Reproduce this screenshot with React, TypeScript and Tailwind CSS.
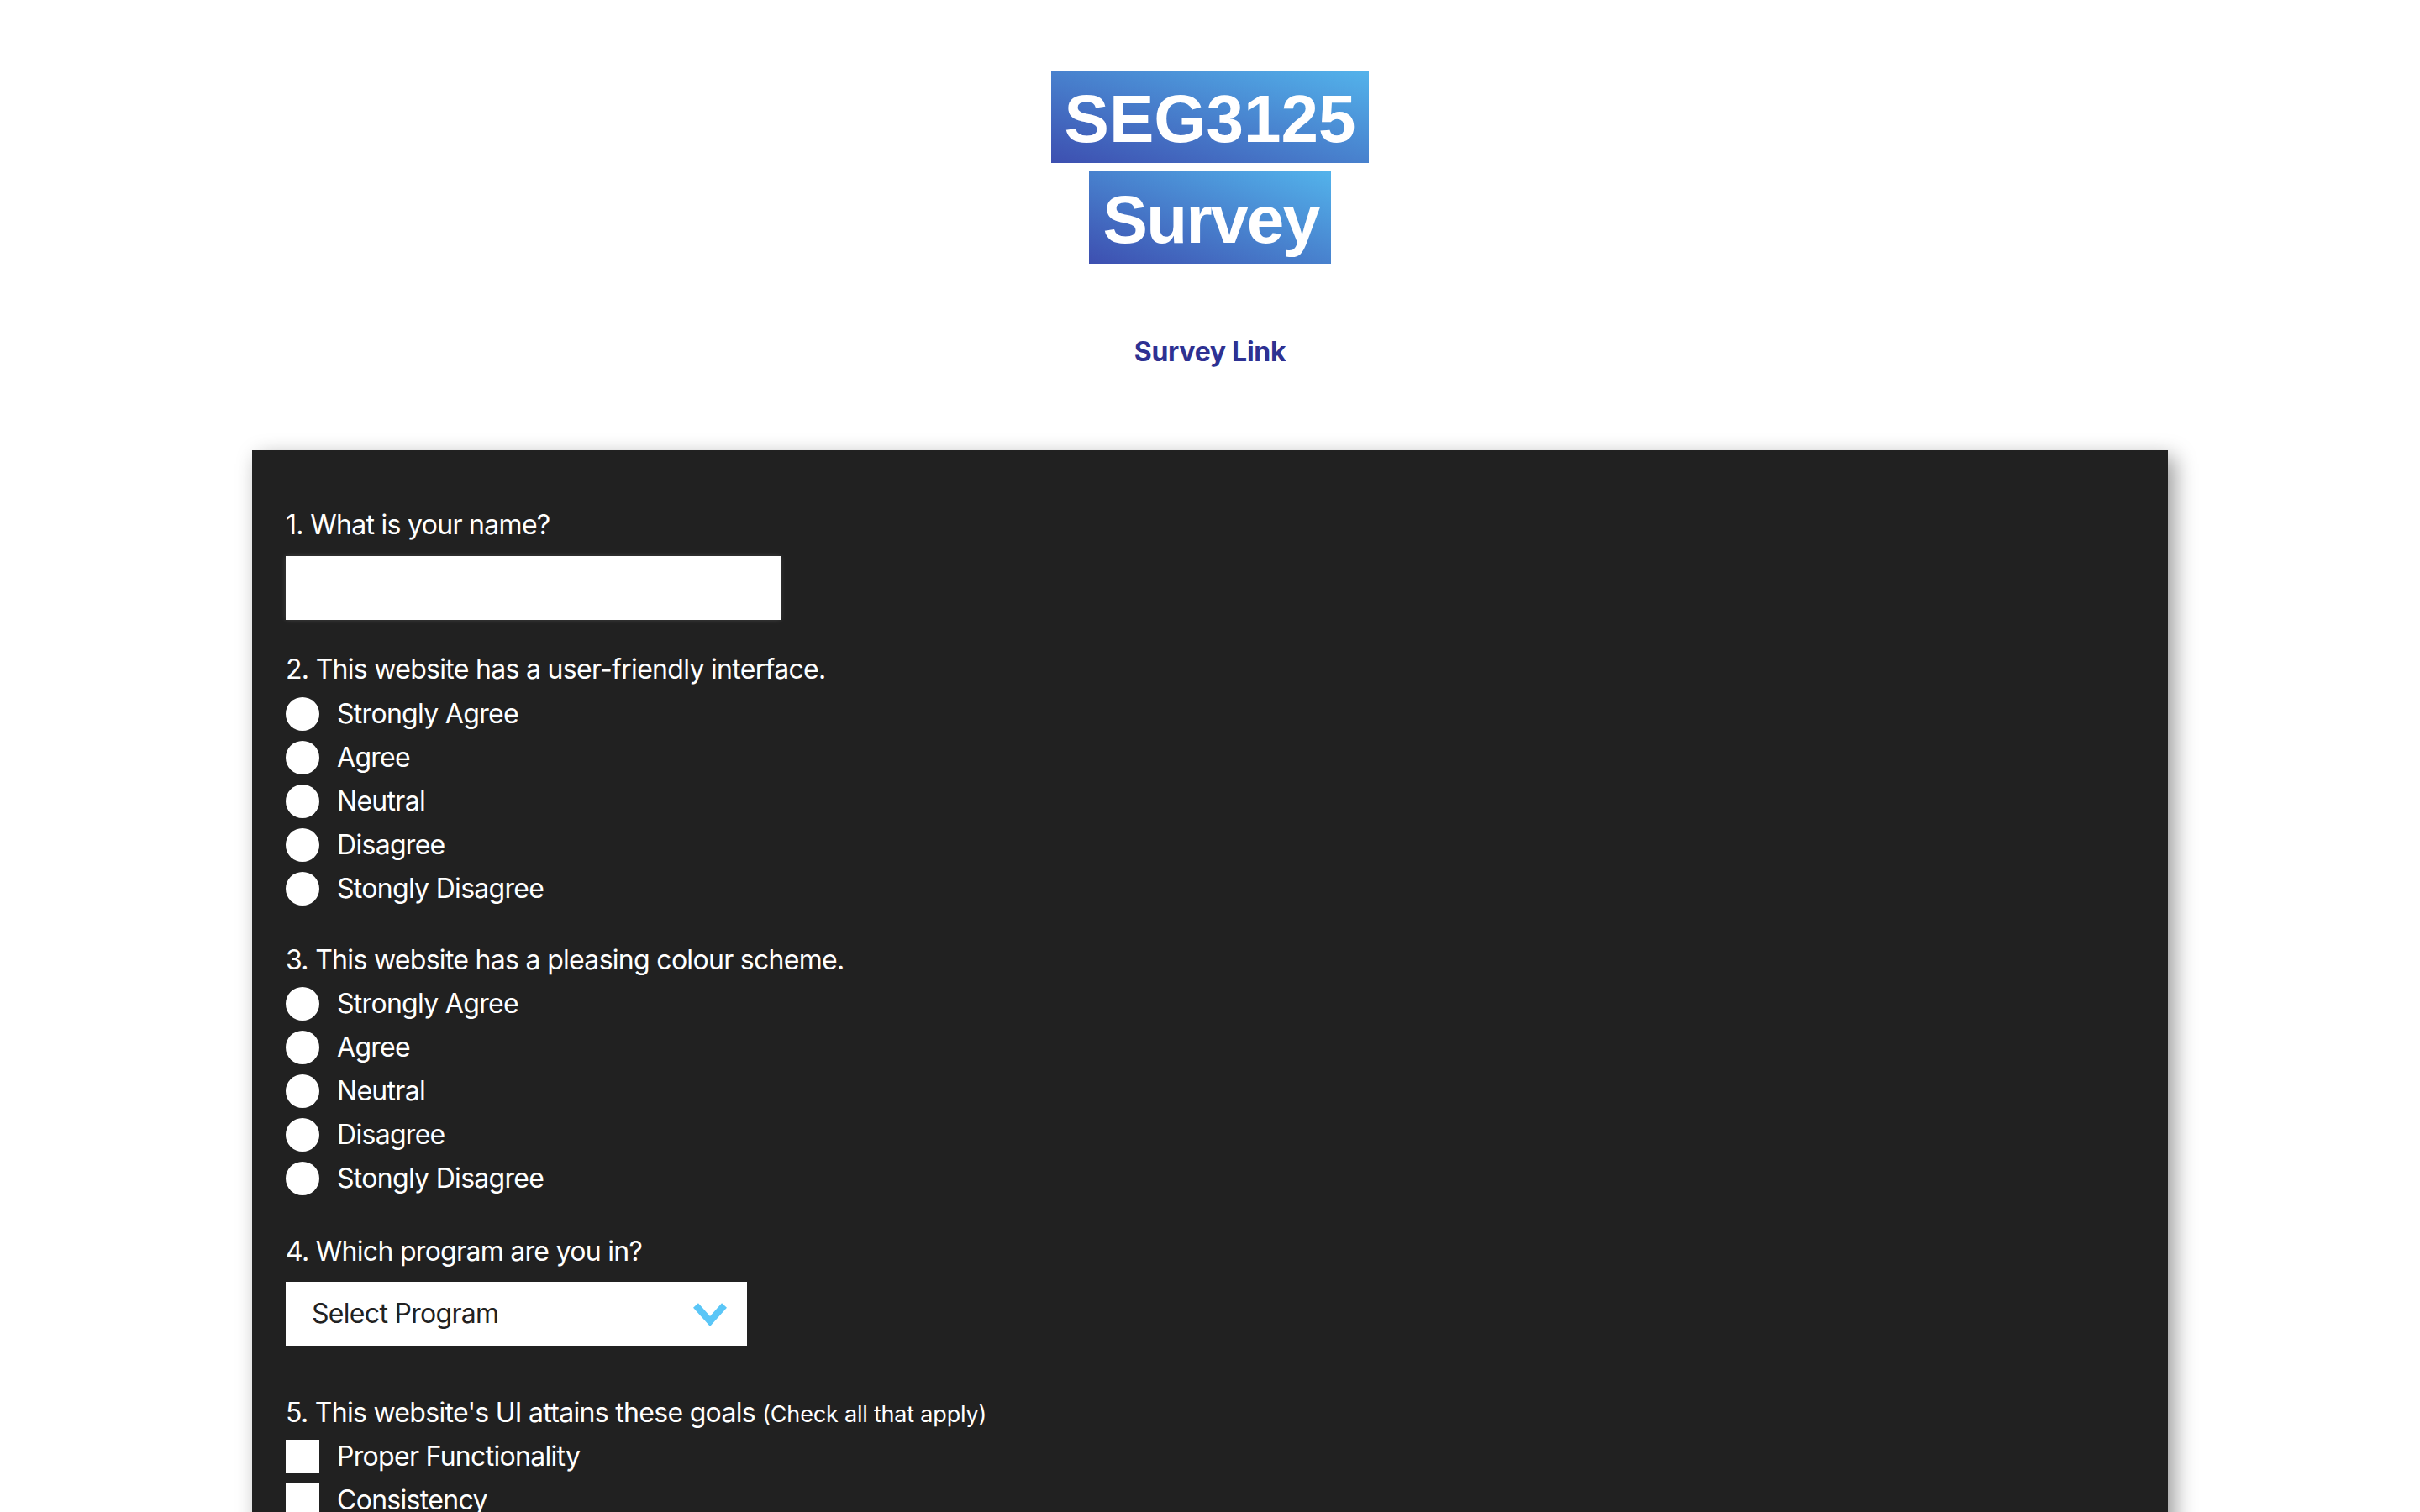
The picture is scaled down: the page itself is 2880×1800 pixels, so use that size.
import React from "react";

const scale = ["Strongly Agree", "Agree", "Neutral", "Disagree", "Stongly Disagree"];
const goals = ["Proper Functionality", "Consistency", "Visibility", "Feedback", "Aesthetics"];

function Radio({ label }: { label: string }) {
  return (
    <label className="flex h-[52px] items-center">
      <span className="h-[40px] w-[40px] rounded-full bg-white" />
      <span className="ml-[21px]">{label}</span>
    </label>
  );
}

function Check({ label }: { label: string }) {
  return (
    <label className="flex h-[52px] items-center">
      <span className="h-[40px] w-[40px] bg-white" />
      <span className="ml-[21px]">{label}</span>
    </label>
  );
}

function Question({ title, children, className }: { title: React.ReactNode; children: React.ReactNode; className?: string }) {
  return (
    <div className={className}>
      <p className="leading-[40px]">{title}</p>
      {children}
    </div>
  );
}

export default function App() {
  return (
    <div className="min-h-screen bg-white pb-[120px] font-['Inter',sans-serif] text-[32px] tracking-[-0.7px]">
      <header className="flex flex-col items-center gap-[10px] pt-[84px] font-['Liberation_Sans',Arial,sans-serif] text-[80px] font-bold tracking-normal text-white">
        <span className="flex h-[110px] items-center bg-[linear-gradient(to_top_right,#3d4fb0,#53b3eb)] px-[16px] pt-[6px]">SEG3125</span>
        <span className="flex h-[110px] items-center bg-[linear-gradient(to_top_right,#3d4fb0,#53b3eb)] pl-[16px] pr-[14px] pt-[6px] tracking-[-1.6px]">Survey</span>
      </header>

      <div className="mt-[81px] text-center">
        <a href="#survey" className="font-bold leading-[40px] tracking-[-0.3px] text-[#2e3192]">Survey Link</a>
      </div>

      <main id="survey" className="mx-[300px] mt-[93px] bg-[#212121] pb-[70px] pl-[40px] pt-[69px] text-white shadow-[8px_8px_24px_rgba(0,0,0,0.4)]">
        <Question title="1. What is your name?">
          <div className="mt-[17px] h-[76px] w-[589px] bg-white shadow-[0_0_6px_rgba(255,255,255,0.15)]" />
        </Question>

        <Question title="2. This website has a user-friendly interface." className="mt-[39px]">
          <div className="mt-[7px]">
            {scale.map((s) => (
              <Radio key={s} label={s} />
            ))}
          </div>
        </Question>

        <Question title="3. This website has a pleasing colour scheme." className="mt-[39px]">
          <div className="mt-[6px]">
            {scale.map((s) => (
              <Radio key={s} label={s} />
            ))}
          </div>
        </Question>

        <Question title="4. Which program are you in?" className="mt-[41px]">
          <div className="mt-[16px] flex h-[76px] w-[549px] items-center justify-between bg-white pl-[31px] pr-[23px] text-[#222]">
            <span>Select Program</span>
            <svg width="42" height="27" viewBox="0 0 42 27" fill="none">
              <path d="M4 3 L21 22 L38 3" stroke="#5ac6f7" strokeWidth="8" strokeLinejoin="miter" />
            </svg>
          </div>
        </Question>

        <Question
          title={
            <>
              5. This website's UI attains these goals <span className="text-[27px] tracking-[-0.2px]">(Check all that apply)</span>
            </>
          }
          className="mt-[60px]"
        >
          <div className="mt-[4px]">
            {goals.map((g) => (
              <Check key={g} label={g} />
            ))}
          </div>
        </Question>
      </main>
    </div>
  );
}
